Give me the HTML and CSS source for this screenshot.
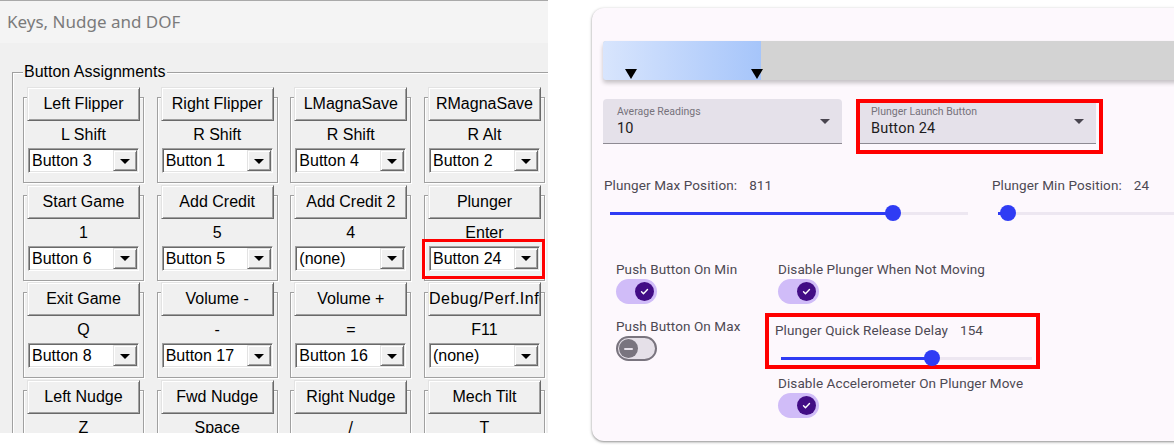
FILE: index.html
```html
<!DOCTYPE html>
<html>
<head>
<meta charset="utf-8">
<title>Keys, Nudge and DOF</title>
<link rel="stylesheet" href="styles.css">
</head>
<body>
<div class="page">
  <section class="dialog">
    <div class="dlg-title">Keys, Nudge and DOF</div>
    <div class="dlg-body">
      <div class="group">
        <div class="group-title">Button Assignments</div>
        <div class="grid">
          <div class="cell"><div class="btn">Left Flipper</div><div class="key">L Shift</div><div class="combo"><span class="combo-val">Button 3</span><span class="combo-btn"><i class="tri"></i></span></div></div>
          <div class="cell"><div class="btn">Right Flipper</div><div class="key">R Shift</div><div class="combo"><span class="combo-val">Button 1</span><span class="combo-btn"><i class="tri"></i></span></div></div>
          <div class="cell"><div class="btn">LMagnaSave</div><div class="key">R Shift</div><div class="combo"><span class="combo-val">Button 4</span><span class="combo-btn"><i class="tri"></i></span></div></div>
          <div class="cell"><div class="btn">RMagnaSave</div><div class="key">R Alt</div><div class="combo"><span class="combo-val">Button 2</span><span class="combo-btn"><i class="tri"></i></span></div></div>

          <div class="cell"><div class="btn">Start Game</div><div class="key">1</div><div class="combo"><span class="combo-val">Button 6</span><span class="combo-btn"><i class="tri"></i></span></div></div>
          <div class="cell"><div class="btn">Add Credit</div><div class="key">5</div><div class="combo"><span class="combo-val">Button 5</span><span class="combo-btn"><i class="tri"></i></span></div></div>
          <div class="cell"><div class="btn">Add Credit 2</div><div class="key">4</div><div class="combo"><span class="combo-val">(none)</span><span class="combo-btn"><i class="tri"></i></span></div></div>
          <div class="cell"><div class="btn">Plunger</div><div class="key">Enter</div><div class="combo combo-hl"><span class="combo-val">Button 24</span><span class="combo-btn"><i class="tri"></i></span></div></div>

          <div class="cell"><div class="btn">Exit Game</div><div class="key">Q</div><div class="combo"><span class="combo-val">Button 8</span><span class="combo-btn"><i class="tri"></i></span></div></div>
          <div class="cell"><div class="btn">Volume -</div><div class="key">-</div><div class="combo"><span class="combo-val">Button 17</span><span class="combo-btn"><i class="tri"></i></span></div></div>
          <div class="cell"><div class="btn">Volume +</div><div class="key">=</div><div class="combo"><span class="combo-val">Button 16</span><span class="combo-btn"><i class="tri"></i></span></div></div>
          <div class="cell"><div class="btn btn-wide">Debug/Perf.Info</div><div class="key">F11</div><div class="combo"><span class="combo-val">(none)</span><span class="combo-btn"><i class="tri"></i></span></div></div>

          <div class="cell"><div class="btn">Left Nudge</div><div class="key">Z</div></div>
          <div class="cell"><div class="btn">Fwd Nudge</div><div class="key">Space</div></div>
          <div class="cell"><div class="btn">Right Nudge</div><div class="key">/</div></div>
          <div class="cell"><div class="btn">Mech Tilt</div><div class="key">T</div></div>
        </div>
      </div>
    </div>
  </section>

  <section class="card">
    <div class="bar">
      <div class="bar-fill"></div>
      <span class="marker" style="left:22px"></span>
      <span class="marker" style="left:148px"></span>
    </div>

    <div class="selects">
      <div class="select">
        <div class="select-text">
          <div class="select-label">Average Readings</div>
          <div class="select-value">10</div>
        </div>
        <span class="select-arrow"></span>
      </div>
      <div class="hl-select">
        <div class="select select-b">
          <div class="select-text">
            <div class="select-label">Plunger Launch Button</div>
            <div class="select-value">Button 24</div>
          </div>
          <span class="select-arrow"></span>
        </div>
      </div>
    </div>

    <div class="sliders">
      <div class="slider-field">
        <div class="field-label">Plunger Max Position:<span class="val">811</span></div>
        <div class="slider"><div class="track"><div class="active" style="width:79%"><span class="thumb"></span></div></div></div>
      </div>
      <div class="slider-field">
        <div class="field-label">Plunger Min Position:<span class="val">24</span></div>
        <div class="slider"><div class="track"><div class="active" style="width:5%"><span class="thumb"></span></div></div></div>
      </div>
    </div>

    <div class="switches">
      <div class="opt">
        <div class="field-label">Push Button On Min</div>
        <div class="switch on"><span class="knob"><svg viewBox="0 0 24 24"><path d="M6.5 12.5l3.6 3.6 7.4-7.6" fill="none" stroke="#fff" stroke-width="2.6" stroke-linecap="round" stroke-linejoin="round"/></svg></span></div>
      </div>
      <div class="opt">
        <div class="field-label">Disable Plunger When Not Moving</div>
        <div class="switch on"><span class="knob"><svg viewBox="0 0 24 24"><path d="M6.5 12.5l3.6 3.6 7.4-7.6" fill="none" stroke="#fff" stroke-width="2.6" stroke-linecap="round" stroke-linejoin="round"/></svg></span></div>
      </div>
      <div class="opt opt-max">
        <div class="field-label">Push Button On Max</div>
        <div class="switch off"><span class="knob"><i class="minus"></i></span></div>
      </div>
      <div class="opt">
        <div class="hl-slider">
          <div class="field-label">Plunger Quick Release Delay<span class="val">154</span></div>
          <div class="slider slider-box"><div class="track"><div class="active" style="width:60%"><span class="thumb"></span></div></div></div>
        </div>
        <div class="field-label after-box">Disable Accelerometer On Plunger Move</div>
        <div class="switch on"><span class="knob"><svg viewBox="0 0 24 24"><path d="M6.5 12.5l3.6 3.6 7.4-7.6" fill="none" stroke="#fff" stroke-width="2.6" stroke-linecap="round" stroke-linejoin="round"/></svg></span></div>
      </div>
    </div>
  </section>
</div>
</body>
</html>
```

FILE: styles.css
```css
* { box-sizing: border-box; }

html, body {
  margin: 0;
  padding: 0;
  background: #ffffff;
}

body {
  width: 1174px;
  height: 445px;
  overflow: hidden;
  font-family: "Liberation Sans", Arial, sans-serif;
}

.page {
  display: flex;
  align-items: flex-start;
}

/* ---------- Windows dialog ---------- */
.dialog {
  flex: 0 0 548px;
  height: 433px;
  background: #f0f0f0;
  border-top: 1px solid #a9a9a9;
  overflow: hidden;
}

.dlg-title {
  height: 42px;
  line-height: 42px;
  padding-left: 7px;
  background: #f4f4f4;
  color: #7b7b7b;
  font-family: "Noto Sans", "Open Sans", sans-serif;
  font-size: 17px;
  white-space: nowrap;
}

.dlg-body {
  padding: 29px 0 0 12px;
}

.group {
  width: 580px;
  height: 420px;
  border: 1px solid #a0a0a0;
  box-shadow: inset 1px 1px 0 #ffffff;
  padding: 0 0 0 10px;
}

.group-title {
  width: max-content;
  margin-top: -10px;
  padding: 0 2px 0 1px;
  background: #f0f0f0;
  font-size: 16px;
  line-height: 18px;
  color: #000;
}

.grid {
  margin-top: 16px;
  display: grid;
  grid-template-columns: repeat(4, 121px);
  grid-auto-rows: 86px;
  column-gap: 12.67px;
  row-gap: 11.67px;
}

.cell {
  border: 1px solid #a0a0a0;
  box-shadow: inset 1px 1px 0 #ffffff, 1px 1px 0 #ffffff;
  padding: 0 3px;
}

.btn {
  position: relative;
  margin-top: -11px;
  height: 34px;
  line-height: 31px;
  background: #f0f0f0;
  border: 1px solid;
  border-color: #e3e3e3 #696969 #696969 #e3e3e3;
  box-shadow: inset 1px 1px 0 #ffffff, inset -1px -1px 0 #a0a0a0;
  font-size: 16px;
  text-align: center;
  white-space: nowrap;
  overflow: hidden;
  color: #000;
}

.btn-wide {
  letter-spacing: 0.5px;
}

.key {
  height: 27px;
  line-height: 27px;
  text-align: center;
  font-size: 16px;
  color: #000;
}

.combo {
  display: flex;
  width: 111px;
  height: 25px;
  margin-left: 1px;
  background: #ffffff;
  border: 1px solid;
  border-color: #a0a0a0 #ffffff #ffffff #a0a0a0;
  box-shadow: inset 1px 1px 0 #696969, inset -1px -1px 0 #e3e3e3;
  padding: 1px;
}

.combo-hl {
  position: relative;
}

.combo-hl::after {
  content: "";
  position: absolute;
  left: -8px;
  right: -6px;
  top: -8px;
  bottom: -9px;
  border: 3px solid #ff0000;
}

.combo-val {
  flex: 1;
  padding-left: 2px;
  font-size: 16px;
  line-height: 21px;
  color: #000;
  white-space: nowrap;
}

.combo-btn {
  width: 24px;
  height: 21px;
  background: #f0f0f0;
  border: 1px solid;
  border-color: #e3e3e3 #696969 #696969 #e3e3e3;
  box-shadow: inset 1px 1px 0 #ffffff, inset -1px -1px 0 #a0a0a0;
  display: flex;
  align-items: center;
  justify-content: center;
}

.tri {
  display: block;
  width: 0;
  height: 0;
  border-left: 5px solid transparent;
  border-right: 5px solid transparent;
  border-top: 5px solid #000;
  margin-top: 1px;
}

/* ---------- Material card ---------- */
.card {
  flex: none;
  margin: 8px 0 0 44px;
  width: 620px;
  height: 433px;
  background: #fdf8fd;
  border-radius: 12px;
  box-shadow: 0 1px 2px rgba(0, 0, 0, 0.3), 0 1px 3px 1px rgba(0, 0, 0, 0.12);
  padding: 33px 0 0 11px;
  font-family: Roboto, "Noto Sans", sans-serif;
}

.bar {
  position: relative;
  width: 640px;
  height: 39px;
  background: #d3d3d3;
  border-radius: 3px;
  box-shadow: 0 3px 4px rgba(0, 0, 0, 0.22);
}

.bar-fill {
  width: 158px;
  height: 100%;
  border-radius: 3px 0 0 3px;
  background: linear-gradient(90deg, #d8e5fd, #a6c5fa);
}

.marker {
  position: absolute;
  bottom: 1px;
  width: 0;
  height: 0;
  border-left: 6px solid transparent;
  border-right: 6px solid transparent;
  border-top: 10px solid #000;
}

.selects {
  display: flex;
  align-items: flex-start;
  gap: 14px;
  margin-top: 19px;
}

.select {
  display: flex;
  align-items: center;
  width: 239px;
  height: 45px;
  background: #e5e1ea;
  border-radius: 4px 4px 0 0;
  border-bottom: 1px solid #8e8a93;
  padding: 0 12px 0 14px;
}

.select-b {
  width: 240px;
  padding-left: 15px;
}

.hl-select {
  outline: 4px solid #ff0000;
  outline-offset: -4px;
  padding: 0 7px 10px 0;
}

.select-text {
  flex: 1;
  padding-top: 2px;
}

.select-label {
  font-size: 10.5px;
  line-height: 13px;
  color: #76727b;
  letter-spacing: 0;
  white-space: nowrap;
}

.select-value {
  font-size: 14.5px;
  line-height: 20px;
  color: #1d1b20;
  letter-spacing: 0.2px;
  margin-top: 1px;
}

.select-arrow {
  width: 0;
  height: 0;
  border-left: 5px solid transparent;
  border-right: 5px solid transparent;
  border-top: 5px solid #49454f;
}

.sliders {
  display: grid;
  grid-template-columns: 376px 1fr;
  column-gap: 12px;
  margin: 21px 0 0 1px;
}

.field-label {
  font-size: 13.5px;
  line-height: 20px;
  color: #4d4953;
  letter-spacing: 0.1px;
  white-space: nowrap;
}

.val {
  margin-left: 12px;
}

.slider {
  height: 36px;
  margin: 0 12px 0 6px;
  display: flex;
  align-items: center;
}

.track {
  flex: 1;
  height: 3px;
  background: #ede7f1;
}

.active {
  position: relative;
  height: 100%;
  background: #2f3cf4;
}

.thumb {
  position: absolute;
  right: -8px;
  top: 50%;
  width: 16px;
  height: 16px;
  margin-top: -8px;
  border-radius: 50%;
  background: #2f3cf4;
}

.switches {
  display: grid;
  grid-template-columns: 150px auto;
  column-gap: 12px;
  row-gap: 9px;
  margin: 28px 0 0 13px;
  align-items: start;
}

.opt-max {
  padding-top: 3px;
}

.switch {
  display: flex;
  align-items: center;
  width: 41px;
  height: 25px;
  border-radius: 13px;
  padding: 0 3px;
}

.switch.on {
  background: #d0bcf8;
  justify-content: flex-end;
}

.switch.off {
  background: #e5e0e8;
  border: 2px solid #79747e;
  padding: 0 1px;
}

.knob {
  width: 19px;
  height: 19px;
  border-radius: 50%;
  display: flex;
  align-items: center;
  justify-content: center;
}

.switch.on .knob {
  background: #420d85;
}

.switch.off .knob {
  background: #79747e;
}

.knob svg {
  width: 13px;
  height: 13px;
}

.minus {
  display: block;
  width: 9px;
  height: 2px;
  border-radius: 1px;
  background: #e6e0e9;
}

.hl-slider {
  width: 275px;
  height: 56px;
  margin-left: -13px;
  padding: 7px 0 0 10px;
  outline: 4px solid #ff0000;
  outline-offset: -4px;
}

.slider-box {
  margin-right: 8px;
}

.after-box {
  margin-top: 4px;
}
```
